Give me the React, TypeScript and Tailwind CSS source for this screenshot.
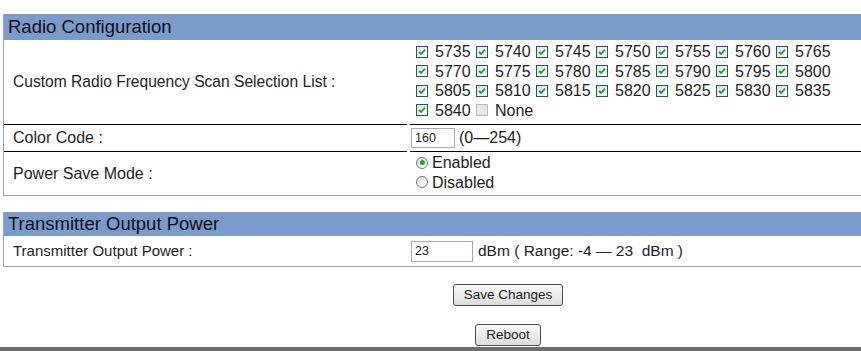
import React from "react";

const freqRows: string[][] = [
  ["5735", "5740", "5745", "5750", "5755", "5760", "5765"],
  ["5770", "5775", "5780", "5785", "5790", "5795", "5800"],
  ["5805", "5810", "5815", "5820", "5825", "5830", "5835"],
  ["5840"],
];

function CheckBox({ checked }: { checked: boolean }) {
  if (!checked) {
    return (
      <span className="inline-block w-[12px] h-[12px] border border-[#b8bcc2] bg-[#e6e7e9] shrink-0" />
    );
  }
  return (
    <span className="inline-flex w-[12px] h-[12px] border border-[#2f4f6f] bg-gradient-to-br from-[#dfe3e8] to-white shrink-0 items-center justify-center">
      <svg width="10" height="10" viewBox="0 0 10 10">
        <path d="M2 5 L4 7 L8 2.6" fill="none" stroke="#21a121" strokeWidth="1.8" />
      </svg>
    </span>
  );
}

function Radio({ checked }: { checked: boolean }) {
  return (
    <span className="inline-flex w-[12px] h-[12px] rounded-full border border-[#6d7a8c] bg-gradient-to-br from-[#d9dde2] to-white items-center justify-center shrink-0">
      {checked && <span className="block w-[5px] h-[5px] rounded-full bg-[#2c9a2c]" />}
    </span>
  );
}

export default function App() {
  return (
    <div className="w-full h-[351px] overflow-hidden bg-white relative font-['Liberation_Sans',Arial,sans-serif] text-[#1e1e1e]">
      <div className="w-[1016px] pt-[14px]">
        {/* Radio Configuration */}
        <div className="ml-[3px] border-l border-b border-[#98a3b4]">
          <div className="h-[26px] bg-[#7b9bcb] pl-[4px] text-[18.5px] leading-[26px] text-[#0d0d18]">
            Radio Configuration
          </div>
          <div className="grid grid-cols-[403px_1fr] gap-x-[3px] text-[16px]">
            <div className="h-[84px] flex items-center pl-[9px] text-[15.6px]">
              Custom Radio Frequency Scan Selection List :
            </div>
            <div className="h-[84px] pl-[6px] pt-[2px] leading-[19.5px]">
              {freqRows.map((row, i) => (
                <div key={i} className="flex items-center h-[19.5px]">
                  {row.map((f) => (
                    <span key={f} className="inline-flex items-center w-[60px]">
                      <CheckBox checked />
                      <span className="ml-[7px]">{f}</span>
                    </span>
                  ))}
                  {i === 3 && (
                    <span className="inline-flex items-center">
                      <CheckBox checked={false} />
                      <span className="ml-[7px]">None</span>
                    </span>
                  )}
                </div>
              ))}
            </div>

            <div className="border-t border-black h-[27px] flex items-center pl-[9px]">
              Color Code :
            </div>
            <div className="border-t border-black h-[27px] flex items-center pl-[1px]">
              <span className="inline-flex items-center w-[44px] h-[20px] border border-[#a3abb5] pl-[3px] text-[12.5px]">
                160
              </span>
              <span className="ml-[4px]">(0—254)</span>
            </div>

            <div className="border-t border-black h-[44px] flex items-center pl-[9px]">
              Power Save Mode :
            </div>
            <div className="border-t border-black h-[44px] pl-[6px] pt-[1px] leading-[19.5px]">
              <div className="flex items-center h-[19.5px]">
                <Radio checked />
                <span className="ml-[4px]">Enabled</span>
              </div>
              <div className="flex items-center h-[19.5px]">
                <Radio checked={false} />
                <span className="ml-[4px]">Disabled</span>
              </div>
            </div>
          </div>
        </div>

        {/* Transmitter Output Power */}
        <div className="ml-[3px] mt-[16px] border-l border-b border-[#98a3b4]">
          <div className="h-[24px] bg-[#7b9bcb] pl-[4px] text-[18.5px] leading-[24px] text-[#0d0d18]">
            Transmitter Output Power
          </div>
          <div className="grid grid-cols-[403px_1fr] gap-x-[3px] text-[15.5px]">
            <div className="h-[30px] flex items-center pl-[9px] text-[15px]">
              Transmitter Output Power :
            </div>
            <div className="h-[30px] flex items-center pl-[1px]">
              <span className="inline-flex items-center w-[62px] h-[21px] border border-[#a3abb5] pl-[3px] text-[12.5px]">
                23
              </span>
              <span className="ml-[5px] whitespace-pre">dBm ( Range: -4 — 23  dBm )</span>
            </div>
          </div>
        </div>

        <div className="flex flex-col items-center pt-[17px]">
          <button className="h-[22px] px-[10px] rounded-[3px] border border-[#4a4f57] bg-gradient-to-b from-[#fafafa] to-[#dcdcdc] text-[13.5px] leading-[20px] text-[#1e1e1e]">
            Save Changes
          </button>
          <button className="mt-[18px] h-[22px] px-[10px] rounded-[3px] border border-[#4a4f57] bg-gradient-to-b from-[#fafafa] to-[#dcdcdc] text-[13.5px] leading-[20px] text-[#1e1e1e]">
            Reboot
          </button>
        </div>
      </div>
      <div className="absolute left-0 right-0 bottom-0 h-[4px] bg-[#6e6e6e]" />
    </div>
  );
}
